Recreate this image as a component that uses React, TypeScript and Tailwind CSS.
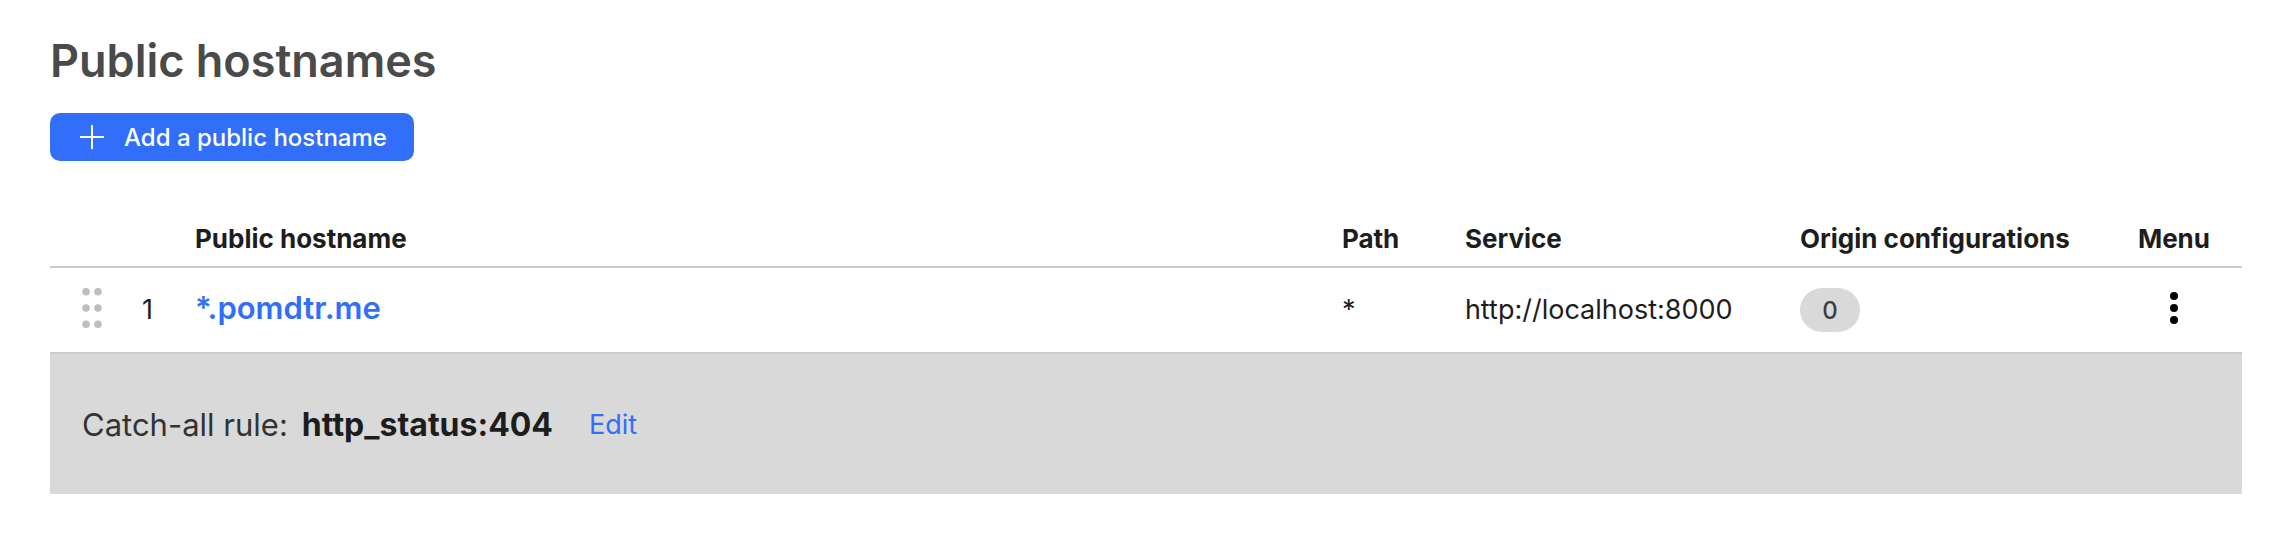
const rules = [
  { position: 1, hostname: "*.pomdtr.me", path: "*", service: "http://localhost:8000", configurations: 0 },
];

function PlusIcon() {
  return (
    <svg className="size-6" viewBox="0 0 24 24" stroke="currentColor" strokeWidth="2" aria-hidden="true">
      <path d="M12 0V24M0 12H24" />
    </svg>
  );
}

function GripIcon() {
  return (
    <svg className="h-10 w-5" viewBox="0 0 20 40" fill="currentColor" aria-hidden="true">
      <circle cx="4" cy="3.8" r="3.8" />
      <circle cx="16" cy="3.8" r="3.8" />
      <circle cx="4" cy="20" r="3.8" />
      <circle cx="16" cy="20" r="3.8" />
      <circle cx="4" cy="36.2" r="3.8" />
      <circle cx="16" cy="36.2" r="3.8" />
    </svg>
  );
}

function MenuIcon() {
  return (
    <svg className="h-8 w-2" viewBox="0 0 8 32" fill="currentColor" aria-hidden="true">
      <circle cx="4" cy="4" r="4" />
      <circle cx="4" cy="16" r="4" />
      <circle cx="4" cy="28" r="4" />
    </svg>
  );
}

export default function App() {
  return (
    <main className="bg-white pt-8 pr-[34px] pb-10 pl-[50px] font-['Inter',sans-serif] text-[#1d1d1d]">
      <h1 className="text-[45px] leading-[57px] font-semibold text-[#4a4a4a]">Public hostnames</h1>
      <button
        type="button"
        className="mt-6 flex h-12 items-center gap-5 rounded-[10px] bg-[#316efa] pr-[27px] pl-[30px] text-2xl font-medium text-white"
      >
        <PlusIcon />
        <span className="pt-0.5">Add a public hostname</span>
      </button>

      <table className="mt-[50px] w-full text-left">
        <thead>
          <tr className="h-14 border-b-2 border-[#cbcbcb] text-[26px] leading-8 whitespace-nowrap">
            <td className="w-[82px]" />
            <td className="w-[31px]" />
            <th scope="col" className="px-8 font-bold">Public hostname</th>
            <th scope="col" className="w-[123px] px-8 font-bold">Path</th>
            <th scope="col" className="w-[335px] px-8 font-bold">Service</th>
            <th scope="col" className="w-[338px] px-8 font-bold">Origin configurations</th>
            <th scope="col" className="w-px px-8 font-bold">Menu</th>
          </tr>
        </thead>
        <tbody>
          {rules.map((rule) => (
            <tr key={rule.position} className="h-[86px] border-b-2 border-[#cbcbcb] text-[27px] leading-8">
              <td className="pb-1 pl-8">
                <button type="button" aria-label="Reorder" className="flex text-[#bdbdbd]">
                  <GripIcon />
                </button>
              </td>
              <td className="text-center">{rule.position}</td>
              <td className="px-8 pb-0.5">
                <a href="#hostname" className="text-[31px] font-semibold text-[#316efa]">{rule.hostname}</a>
              </td>
              <td className="px-8">{rule.path}</td>
              <td className="px-8">{rule.service}</td>
              <td className="px-8">
                <span className="inline-flex h-11 w-[60px] items-center justify-center rounded-full bg-[#d9d9d9] pt-0.5 align-middle text-2xl font-medium text-[#3f3f3f]">
                  {rule.configurations}
                </span>
              </td>
              <td className="px-8 pb-1">
                <button type="button" aria-label="Menu" className="mx-auto flex text-black">
                  <MenuIcon />
                </button>
              </td>
            </tr>
          ))}
        </tbody>
      </table>

      <section className="flex h-[140px] items-center bg-[#d9d9d9] px-8 pt-0.5 text-[31px]">
        <span className="text-[#333333]">Catch-all rule:</span>
        <strong className="ml-3.5 text-[32px] font-bold">http_status:404</strong>
        <a href="#edit" className="ml-9 text-[27px] text-[#316efa]">Edit</a>
      </section>
    </main>
  );
}
